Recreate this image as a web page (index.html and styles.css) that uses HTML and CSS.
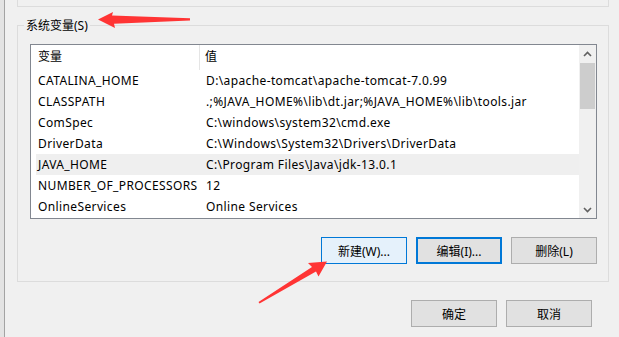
FILE: index.html
```html
<!DOCTYPE html>
<html lang="zh-CN">
<head>
  <meta charset="UTF-8" />
  <meta name="viewport" content="width=device-width, initial-scale=1.0"/>
  <title>环境变量</title>
  <link rel="stylesheet" href="styles.css">
</head>
<body>
  <div class="window">
    <div class="edge"></div>
    <div class="main">
      <div class="top-group"></div>

      <fieldset class="group">
        <legend><span class="legend-text">系统变量(S)</span></legend>

        <div class="listbox">
          <div class="list">
            <div class="list-head">
              <span class="head-name">变量</span>
              <span class="head-value">值</span>
            </div>
            <div class="row"><span class="col-name">CATALINA_HOME</span><span class="col-value">D:\apache-tomcat\apache-tomcat-7.0.99</span></div>
            <div class="row"><span class="col-name">CLASSPATH</span><span class="col-value">.;%JAVA_HOME%\lib\dt.jar;%JAVA_HOME%\lib\tools.jar</span></div>
            <div class="row"><span class="col-name">ComSpec</span><span class="col-value">C:\windows\system32\cmd.exe</span></div>
            <div class="row"><span class="col-name">DriverData</span><span class="col-value">C:\Windows\System32\Drivers\DriverData</span></div>
            <div class="row selected"><span class="col-name">JAVA_HOME</span><span class="col-value">C:\Program Files\Java\jdk-13.0.1</span></div>
            <div class="row"><span class="col-name">NUMBER_OF_PROCESSORS</span><span class="col-value">12</span></div>
            <div class="row"><span class="col-name">OnlineServices</span><span class="col-value">Online Services</span></div>
          </div>
          <div class="scrollbar">
            <span class="sb-arrow">
              <svg width="9" height="6" viewBox="0 0 9 6"><path d="M1 5 L4.5 1.5 L8 5" fill="none" stroke="#606060" stroke-width="1.6"/></svg>
            </span>
            <span class="sb-thumb"></span>
            <span class="sb-space"></span>
            <span class="sb-arrow">
              <svg width="9" height="6" viewBox="0 0 9 6"><path d="M1 1 L4.5 4.5 L8 1" fill="none" stroke="#606060" stroke-width="1.6"/></svg>
            </span>
          </div>
        </div>

        <div class="btn-row">
          <button class="btn hover">新建(W)...</button>
          <button class="btn focused">编辑(I)...</button>
          <button class="btn">删除(L)</button>
        </div>
      </fieldset>

      <div class="dialog-buttons">
        <button class="btn">确定</button>
        <button class="btn">取消</button>
      </div>
    </div>
  </div>

  <!-- red annotation arrows drawn over the dialog -->
  <svg class="marks" width="619" height="337" viewBox="0 0 619 337">
    <polygon points="98,19.5 113,12 112,15.5 190,18.3 190,20.6 114,23.8 115,28" fill="#ff3434"/>
    <polygon points="327,261.5 318.5,276.5 316,271.5 259.5,303.5 258.5,302 312,267 308,263" fill="#ff3434"/>
  </svg>
</body>
</html>
```

FILE: styles.css
```css
body {
  margin: 0;
  background: #f0f0f0;
  font-family: "Noto Sans", "Noto Sans CJK SC", sans-serif;
  font-size: 12px;
  color: #000;
  overflow: hidden;
  position: relative;
  width: 619px;
  height: 337px;
}

.window {
  display: flex;
  height: 337px;
}

.edge {
  width: 4px;
  background: #e3e3e3;
  border-right: 1px solid #a3a3a3;
}

.main {
  margin-left: 12px;
  width: 592px;
}

.top-group {
  height: 6px;
  border: 1px solid #dcdcdc;
  border-top: none;
}

.group {
  margin: 10px 0 0 0;
  padding: 11px 11px 17px 12px;
  border: 1px solid #dcdcdc;
  min-width: 0;
}

.group legend {
  margin-left: -6px;
  padding: 0 2px;
  line-height: 16px;
}

.legend-text {
  position: relative;
  top: 1px;
}

.listbox {
  display: flex;
  height: 175px;
  box-sizing: border-box;
  border: 1px solid #828790;
  background: #fff;
}

.list {
  flex: 1;
}

.list-head {
  display: flex;
  height: 25px;
  line-height: 24px;
}

.head-name {
  width: 169px;
  padding-left: 7px;
  box-sizing: border-box;
  border-right: 1px solid #e5e5e5;
}

.head-value {
  padding-left: 5px;
}

.row {
  display: flex;
  height: 21px;
  line-height: 21px;
  margin-left: 5px;
  white-space: nowrap;
  letter-spacing: 0.38px;
}

.row.selected {
  background: #efefef;
}

.col-name {
  width: 164px;
  padding-left: 2px;
  box-sizing: border-box;
}

.col-value {
  padding-left: 6px;
}

.scrollbar {
  width: 17px;
  background: #f0f0f0;
  display: flex;
  flex-direction: column;
}

.sb-arrow {
  height: 17px;
  display: flex;
  align-items: center;
  justify-content: center;
}

.sb-thumb {
  height: 46px;
  margin: 1px 1px 0 1px;
  background: #cdcdcd;
}

.sb-space {
  flex: 1;
}

.btn-row {
  display: flex;
  justify-content: flex-end;
  gap: 9px;
  margin-top: 18px;
}

.btn {
  width: 86px;
  height: 27px;
  box-sizing: border-box;
  border: 1px solid #adadad;
  background: #e1e1e1;
  font-family: inherit;
  font-size: 12px;
  color: #000;
  padding: 0;
}

.btn.hover {
  background: #e5f1fb;
  border-color: #0078d7;
}

.btn.focused {
  border: 2px solid #0078d7;
}

.dialog-buttons {
  display: flex;
  justify-content: flex-end;
  gap: 9px;
  margin-top: 18px;
  padding-right: 17px;
}

.marks {
  position: absolute;
  top: 0;
  left: 0;
  pointer-events: none;
}
```
